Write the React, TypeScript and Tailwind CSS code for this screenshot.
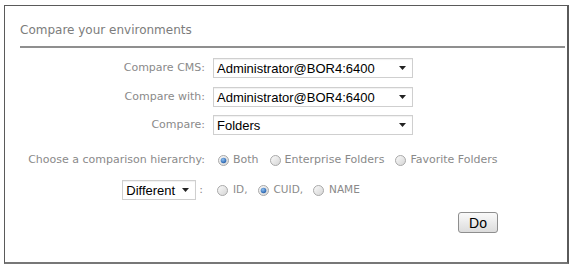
import React from "react";

const labelFont = "font-['DejaVu_Sans',Verdana,sans-serif]";
const inputFont = "font-['Liberation_Sans',Arial,sans-serif]";

function Arrow() {
  return (
    <svg width="7" height="4" viewBox="0 0 7 4" className="shrink-0">
      <path d="M0 0h7L3.5 4z" fill="#222" />
    </svg>
  );
}

function Select({ value, width }: { value: string; width: string }) {
  return (
    <div className={`flex h-5 items-center justify-between border border-[#cfcfcf] bg-white pl-[3px] pr-[6px] text-[13px] leading-none text-black shadow-[inset_0_1px_1px_rgba(0,0,0,0.06)] ${inputFont} ${width}`}>
      <span>{value}</span>
      <Arrow />
    </div>
  );
}

function Radio({ checked, label, small }: { checked?: boolean; label: string; small?: boolean }) {
  return (
    <span className={`flex items-center ${small ? "gap-[5px]" : "gap-[4px]"}`}>
      <svg width="11" height="11" viewBox="0 0 11 11" className="shrink-0">
        <defs>
          <linearGradient id="rb" x1="0" y1="0" x2="1" y2="1">
            <stop offset="0" stopColor="#fbfbfb" />
            <stop offset="1" stopColor="#d4d4d4" />
          </linearGradient>
          <radialGradient id="rd" cx="0.4" cy="0.35" r="0.7">
            <stop offset="0" stopColor="#8fc0f0" />
            <stop offset="1" stopColor="#1f5aa8" />
          </radialGradient>
        </defs>
        <circle cx="5.5" cy="5.5" r="5" fill="url(#rb)" stroke="#a9a9a9" strokeWidth="1" />
        {checked && <circle cx="5.5" cy="5.5" r="2.8" fill="url(#rd)" />}
      </svg>
      <span className={small ? "text-[10.5px]" : ""}>{label}</span>
    </span>
  );
}

export default function App() {
  return (
    <div className="h-[271px] w-[578px] bg-white pl-1 pt-[5px]">
      <div className="flex h-[259px] w-[565px] flex-col border border-r-2 border-b-2 border-[#5a5a5a] border-b-[#777] bg-white">
        <div className={`ml-[15px] mr-[2px] mt-[16px] border-b-2 border-[#8f8f8f] pb-2 text-[12px] leading-4 text-[#7c7c7c] ${labelFont}`}>
          Compare your environments
        </div>

        <div className={`mt-[10px] grid grid-cols-[200px_1fr] items-center gap-x-2 text-[11px] text-[#8a8a8a] ${labelFont}`}>
          <span className="text-right">Compare CMS:</span>
          <Select value="Administrator@BOR4:6400" width="w-[200px]" />

          <span className="mt-[9px] text-right">Compare with:</span>
          <div className="mt-[9px]">
            <Select value="Administrator@BOR4:6400" width="w-[200px]" />
          </div>

          <span className="mt-2 text-right">Compare:</span>
          <div className="mt-2">
            <Select value="Folders" width="w-[200px]" />
          </div>

          <span className="mt-[15px] h-5 text-right leading-5">Choose a comparison hierarchy:</span>
          <div className="mt-[15px] flex h-5 items-center gap-[11px] pl-[5px]">
            <Radio checked label="Both" />
            <Radio label="Enterprise Folders" />
            <Radio label="Favorite Folders" />
          </div>

          <div className="mt-[10px] flex items-center justify-end gap-[3px] pr-[2px]">
            <Select value="Different" width="w-[74px]" />
            <span>:</span>
          </div>
          <div className="mt-[10px] flex h-5 items-center gap-[10px] pl-[4px]">
            <Radio label="ID," small />
            <Radio checked label="CUID," small />
            <Radio label="NAME" small />
          </div>
        </div>

        <div className="mt-3 flex pl-[453px]">
          <button
            type="button"
            className={`h-[21px] w-10 rounded-[3px] border border-[#8e8e8e] bg-gradient-to-b from-[#fafafa] to-[#dcdcdc] text-[14px] leading-none text-black ${inputFont}`}
          >
            Do
          </button>
        </div>
      </div>
    </div>
  );
}
